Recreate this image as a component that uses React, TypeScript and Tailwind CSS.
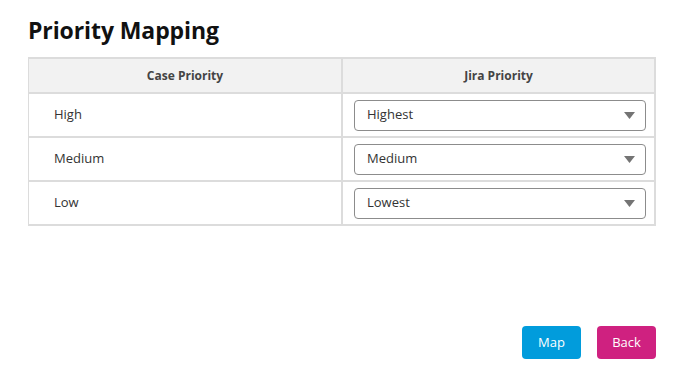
import { useState } from "react";

const rows = [
  { name: "High", value: "Highest" },
  { name: "Medium", value: "Medium" },
  { name: "Low", value: "Lowest" },
];

function Select({ value }: { value: string }) {
  return (
    <div className="flex h-[31px] w-full items-center justify-between rounded-[4px] border border-[#8c8c8c] bg-white pl-3 pr-[10px] text-[13px] text-[#333]">
      <span>{value}</span>
      <svg width="11" height="7" viewBox="0 0 11 7">
        <path d="M0 0 L11 0 L5.5 7 Z" fill="#747474" />
      </svg>
    </div>
  );
}

export default function App() {
  const [data] = useState(rows);
  return (
    <div className="min-h-[378px] w-[690px] bg-white pl-[28px] pr-[34px] pt-[14px] font-['Open_Sans',sans-serif] text-[#222]">
      <h1 className="text-[23px] font-bold leading-[32px] tracking-[-0.1px] text-[#111]">Priority Mapping</h1>
      <div className="mt-[11px] border-t-2 border-l border-b-2 border-[#dcdcdc]">
        <div className="flex h-[35px] border-b-2 border-[#dcdcdc] bg-[#f2f2f2] text-[12px] font-bold text-[#444]">
          <div className="flex w-[314px] items-center justify-center border-r-2 border-[#dcdcdc]">Case Priority</div>
          <div className="flex flex-1 items-center justify-center border-r-2 border-[#dcdcdc]">Jira Priority</div>
        </div>
        {data.map((r, i) => (
          <div
            key={r.name}
            className={`flex ${i < data.length - 1 ? "h-[44px] border-b-2 border-[#dcdcdc]" : "h-[42px]"}`}
          >
            <div className="flex w-[314px] items-center border-r-2 border-[#dcdcdc] pl-[25px] text-[13px] text-[#333]">
              {r.name}
            </div>
            <div className="flex flex-1 items-center border-r-2 border-[#dcdcdc] pl-[11px] pr-[8px]">
              <Select value={r.value} />
            </div>
          </div>
        ))}
      </div>
      <div className="mt-[100px] flex justify-end gap-[16px]">
        <button className="h-[33px] w-[59px] rounded-[4px] bg-[#019cdc] text-[13px] font-medium text-white">Map</button>
        <button className="h-[33px] w-[59px] rounded-[4px] bg-[#cf2180] text-[13px] font-medium text-white">Back</button>
      </div>
    </div>
  );
}
